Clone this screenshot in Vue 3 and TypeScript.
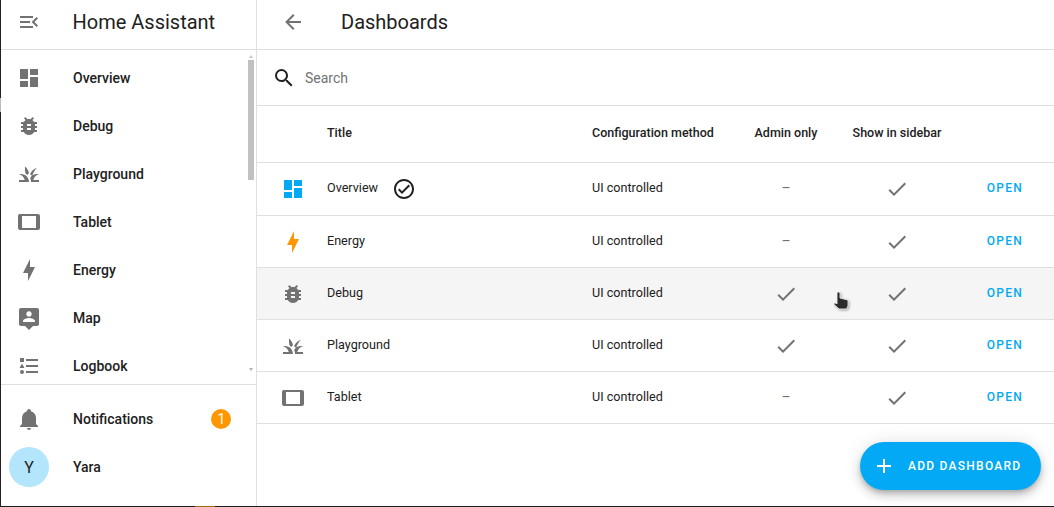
<script setup lang="ts">
const icons = {
  menuOpen: 'M21,15.61L19.59,17L14.58,12L19.59,7L21,8.39L17.44,12L21,15.61M3,6H16V8H3V6M3,13V11H13V13H3M3,18V16H16V18H3Z',
  dashboard: 'M13,3V9H21V3M13,21H21V11H13M3,21H11V15H3M3,13H11V3H3V13Z',
  bug: 'M14,12H10V10H14M14,16H10V14H14M20,8H17.19C16.74,7.22 16.12,6.55 15.37,6.04L17,4.41L15.59,3L13.42,5.17C12.96,5.06 12.5,5 12,5C11.5,5 11.04,5.06 10.59,5.17L8.41,3L7,4.41L8.62,6.04C7.88,6.55 7.26,7.22 6.81,8H4V10H6.09C6.04,10.33 6,10.66 6,11V12H4V14H6V15C6,15.34 6.04,15.67 6.09,16H4V18H6.81C7.85,19.79 9.78,21 12,21C14.22,21 16.15,19.79 17.19,18H20V16H17.91C17.96,15.67 18,15.34 18,15V14H20V12H18V11C18,10.66 17.96,10.33 17.91,10H20V8Z',
  grass: 'M12 20H2V18H7.75C7 15.19 4.81 13 2 12.26C2.64 12.09 3.31 12 4 12C8.42 12 12 15.58 12 20M22 12.26C21.36 12.09 20.69 12 20 12C17.07 12 14.5 13.58 13.12 15.96C13.41 16.59 13.65 17.28 13.79 18C13.93 18.65 14 19.32 14 20H22V18H16.24C17 15.19 19.19 13 22 12.26M20 5.8C16.8 6.8 14.3 9 13.1 12.2C13.9 12.8 14.6 13.4 15.2 14.1C16 11.2 17.6 8 20 5.8M8 4.5C10 6 11.5 8.5 12 11.3C11.3 11.9 10.8 12.4 10.4 13C9.8 12.5 9.2 12 8.6 11.7C8 9.5 7.8 7 8 4.5Z',
  tablet: 'M19,18H5V6H19M21,4H3C1.89,4 1,4.89 1,6V18A2,2 0 0,0 3,20H21A2,2 0 0,0 23,18V6C23,4.89 22.1,4 21,4Z',
  bolt: 'M11 15H6L13 1V9H18L11 23V15Z',
  map: 'M20,2H4C2.9,2 2,2.9 2,4V18C2,19.1 2.9,20 4,20H8L12,24L16,20H20C21.1,20 22,19.1 22,18V4C22,2.9 21.1,2 20,2M12,5.3C13.49,5.3 14.7,6.51 14.7,8C14.7,9.49 13.49,10.7 12,10.7C10.51,10.7 9.3,9.49 9.3,8C9.3,6.51 10.51,5.3 12,5.3M18,16H6V15.1C6,13.1 10,12 12,12C14,12 18,13.1 18,15.1V16Z',
  logbook: 'M5,9.5L7.5,14H2.5L5,9.5M3,4H7V8H3V4M5,20A2,2 0 0,0 7,18A2,2 0 0,0 5,16A2,2 0 0,0 3,18A2,2 0 0,0 5,20M9,5V7H21V5H9M9,19H21V17H9V19M9,13H21V11H9V13Z',
  bell: 'M21,19V20H3V19L5,17V11C5,7.9 7.03,5.17 10,4.29C10,4.19 10,4.1 10,4A2,2 0 0,1 12,2A2,2 0 0,1 14,4C14,4.1 14,4.19 14,4.29C16.97,5.17 19,7.9 19,11V17L21,19M14,21A2,2 0 0,1 12,23A2,2 0 0,1 10,21',
  back: 'M20,11V13H8L13.5,18.5L12.08,19.92L4.16,12L12.08,4.08L13.5,5.5L8,11H20Z',
  search: 'M9.5,3A6.5,6.5 0 0,1 16,9.5C16,11.11 15.41,12.59 14.44,13.73L14.71,14H15.5L20.5,19L19,20.5L14,15.5V14.71L13.73,14.44C12.59,15.41 11.11,16 9.5,16A6.5,6.5 0 0,1 3,9.5A6.5,6.5 0 0,1 9.5,3M9.5,5C7,5 5,7 5,9.5C5,12 7,14 9.5,14C12,14 14,12 14,9.5C14,7 12,5 9.5,5Z',
  defaultMark: 'M12 2C6.5 2 2 6.5 2 12S6.5 22 12 22 22 17.5 22 12 17.5 2 12 2M12 20C7.59 20 4 16.41 4 12S7.59 4 12 4 20 7.59 20 12 16.41 20 12 20M16.59 7.58L10 14.17L7.41 11.59L6 13L10 17L18 9L16.59 7.58Z',
  check: 'M21,7L9,19L3.5,13.5L4.91,12.09L9,16.17L19.59,5.59L21,7Z',
  plus: 'M19,13H13V19H11V13H5V11H11V5H13V11H19V13Z',
}

const navItems = [
  { label: 'Overview', icon: icons.dashboard },
  { label: 'Debug', icon: icons.bug },
  { label: 'Playground', icon: icons.grass },
  { label: 'Tablet', icon: icons.tablet },
  { label: 'Energy', icon: icons.bolt },
  { label: 'Map', icon: icons.map },
  { label: 'Logbook', icon: icons.logbook },
]

const rows = [
  { title: 'Overview', icon: icons.dashboard, color: '#03a9f4', isDefault: true, admin: false, hovered: false },
  { title: 'Energy', icon: icons.bolt, color: '#ff9800', isDefault: false, admin: false, hovered: false },
  { title: 'Debug', icon: icons.bug, color: '#727272', isDefault: false, admin: true, hovered: true },
  { title: 'Playground', icon: icons.grass, color: '#727272', isDefault: false, admin: true, hovered: false },
  { title: 'Tablet', icon: icons.tablet, color: '#727272', isDefault: false, admin: false, hovered: false },
]
</script>

<template>
  <div class="screen">
    <aside class="sidebar">
      <div class="brand">
        <svg class="icon nav-icon" viewBox="0 0 24 24"><path :d="icons.menuOpen" /></svg>
        <span class="brand-title">Home Assistant</span>
      </div>
      <nav class="nav">
        <a v-for="item in navItems" :key="item.label" class="nav-item">
          <svg class="icon nav-icon" viewBox="0 0 24 24"><path :d="item.icon" /></svg>
          <span>{{ item.label }}</span>
        </a>
        <div class="scroll-thumb"></div>
        <div class="scroll-arrow scroll-arrow--up"></div>
        <div class="scroll-arrow scroll-arrow--down"></div>
      </nav>
      <div class="sidebar-footer">
        <a class="nav-item">
          <svg class="icon nav-icon" viewBox="0 0 24 24"><path :d="icons.bell" /></svg>
          <span>Notifications</span>
          <span class="badge">1</span>
        </a>
        <a class="nav-item">
          <span class="avatar">Y</span>
          <span>Yara</span>
        </a>
      </div>
    </aside>

    <main class="content">
      <header class="topbar">
        <svg class="icon back-icon" viewBox="0 0 24 24"><path :d="icons.back" /></svg>
        <h1>Dashboards</h1>
      </header>
      <div class="search">
        <svg class="icon search-icon" viewBox="0 0 24 24"><path :d="icons.search" /></svg>
        <span>Search</span>
      </div>
      <div class="row row--head">
        <span></span>
        <span>Title</span>
        <span>Configuration method</span>
        <span class="center">Admin only</span>
        <span class="center">Show in sidebar</span>
        <span></span>
      </div>
      <div
        v-for="(row, index) in rows"
        :key="row.title"
        class="row"
        :class="{ 'row--hover': row.hovered, 'row--first': index === 0 }"
      >
        <span class="cell-icon">
          <svg class="icon" viewBox="0 0 24 24" :style="{ fill: row.color }"><path :d="row.icon" /></svg>
        </span>
        <span class="title-cell">
          <span class="text">{{ row.title }}</span>
          <svg v-if="row.isDefault" class="icon default-mark" viewBox="0 0 24 24"><path :d="icons.defaultMark" /></svg>
        </span>
        <span class="text">UI controlled</span>
        <span class="center">
          <svg v-if="row.admin" class="icon check" viewBox="0 0 24 24"><path :d="icons.check" /></svg>
          <span v-else class="text dash">–</span>
        </span>
        <span class="center">
          <svg class="icon check" viewBox="0 0 24 24"><path :d="icons.check" /></svg>
        </span>
        <a class="text open">OPEN</a>
      </div>
      <button class="fab" type="button">
        <svg class="icon" viewBox="0 0 24 24"><path :d="icons.plus" /></svg>
        <span>ADD DASHBOARD</span>
      </button>
    </main>

    <svg class="cursor" viewBox="0 0 18 20" width="18" height="20">
      <path
        d="M4 2C4 .8 7 .8 7 2V7L15 9V15L13.5 18H6L1 13.5C.5 12 2.5 11.5 4 13Z"
        fill="#2b2b2b"
        stroke="#fff"
        stroke-width="0.8"
      />
    </svg>
    <div class="edge-left"></div>
    <div class="edge-bottom"></div>
  </div>
</template>

<style>
html,
body {
  margin: 0;
  background: #fff;
}
</style>

<style scoped>
.screen {
  position: relative;
  display: flex;
  width: 1054px;
  height: 507px;
  overflow: hidden;
  background: #fff;
  color: #212121;
  font-family: Roboto, sans-serif;
}

.icon {
  display: block;
  width: 24px;
  height: 24px;
  fill: #727272;
}

.sidebar {
  display: flex;
  flex-direction: column;
  flex: none;
  width: 256px;
  height: 507px;
  border-right: 1px solid #e0e0e0;
}

.brand {
  display: flex;
  align-items: center;
  flex: none;
  box-sizing: border-box;
  height: 50px;
  padding-bottom: 6px;
  border-bottom: 1px solid #e0e0e0;
}

.brand-title {
  margin-left: -0.5px;
  font-size: 20px;
}

.nav-icon {
  flex: none;
  margin: 0 32px 0 17px;
}

.nav {
  position: relative;
  flex: none;
  height: 334px;
  padding-top: 4px;
  box-sizing: border-box;
  overflow: hidden;
}

.nav-item {
  display: flex;
  align-items: center;
  height: 48px;
  font-size: 14px;
  font-weight: 500;
}

.scroll-thumb {
  position: absolute;
  top: 10px;
  left: 248px;
  width: 6px;
  height: 120px;
  background: #c1c1c1;
}

.scroll-arrow {
  position: absolute;
  left: 249px;
  border-left: 2.5px solid transparent;
  border-right: 2.5px solid transparent;
}

.scroll-arrow--up {
  top: 5px;
  border-bottom: 3px solid #c8c8c8;
}

.scroll-arrow--down {
  top: 318px;
  border-top: 3px solid #b0b0b0;
}

.sidebar-footer {
  flex: 1;
  padding-top: 10px;
  border-top: 1px solid #e0e0e0;
}

.badge {
  display: flex;
  align-items: center;
  justify-content: center;
  width: 20px;
  height: 20px;
  margin-left: 58px;
  border-radius: 50%;
  background: #ff9800;
  color: #fff;
  font-size: 14px;
  font-weight: 400;
}

.avatar {
  display: flex;
  align-items: center;
  justify-content: center;
  flex: none;
  width: 40px;
  height: 40px;
  margin: 0 24px 0 9px;
  border-radius: 50%;
  background: #b3e5fc;
  font-size: 16px;
  font-weight: 400;
}

.content {
  position: relative;
  flex: 1;
  min-width: 0;
}

.topbar {
  display: flex;
  align-items: center;
  box-sizing: border-box;
  height: 50px;
  padding-bottom: 6px;
  border-bottom: 1px solid #e0e0e0;
}

.back-icon {
  margin: 0 36px 0 24px;
}

.topbar h1 {
  margin: 0;
  font-size: 20px;
  font-weight: 400;
}

.search {
  display: flex;
  align-items: center;
  gap: 9px;
  height: 55px;
  padding-left: 15px;
  border-bottom: 1px solid #e0e0e0;
  color: #727272;
  font-size: 14px;
}

.search-icon {
  fill: #212121;
}

.row {
  display: grid;
  grid-template-columns: 70px 265px 139px 110px 112px 1fr;
  align-items: center;
  height: 51px;
  border-bottom: 1px solid #e0e0e0;
  font-size: 12.6px;
}

.row--head {
  height: 52px;
  padding-bottom: 4px;
  font-size: 12.5px;
  font-weight: 500;
}

.row--first {
  height: 52px;
}

.row--first .text {
  padding-bottom: 4px;
}

.row--first .open,
.row--first .dash {
  padding-bottom: 2px;
}

.row--hover {
  background: #f5f5f5;
}

.text {
  padding-bottom: 2px;
}

.cell-icon {
  display: flex;
  justify-content: center;
  padding-left: 2px;
}

.title-cell {
  display: flex;
  align-items: center;
  gap: 14px;
}

.default-mark {
  fill: #212121;
}

.center {
  display: flex;
  justify-content: center;
}

.dash {
  color: #727272;
  font-size: 14px;
}

.open {
  padding-right: 31px;
  color: #03a9f4;
  font-size: 12px;
  font-weight: 500;
  letter-spacing: 1.25px;
  text-align: right;
}

.fab {
  position: absolute;
  top: 442px;
  left: 603px;
  display: flex;
  align-items: center;
  gap: 12px;
  width: 181px;
  height: 48px;
  padding: 0 0 0 12px;
  border: none;
  border-radius: 24px;
  background: #03a9f4;
  box-shadow: 0 3px 5px -1px rgba(0, 0, 0, 0.2), 0 6px 10px rgba(0, 0, 0, 0.14), 0 1px 18px rgba(0, 0, 0, 0.12);
  color: #fff;
  font-family: Roboto, sans-serif;
  font-size: 12px;
  font-weight: 500;
  letter-spacing: 1.25px;
}

.fab .icon {
  fill: #fff;
}

.cursor {
  position: absolute;
  top: 291px;
  left: 833px;
  filter: drop-shadow(1px 1px 1px rgba(0, 0, 0, 0.35));
}

.edge-left {
  position: absolute;
  top: 0;
  left: 0;
  width: 1px;
  height: 100%;
  background: linear-gradient(#222 0 98px, #bbb 98px 112px, #222 112px);
}

.edge-bottom {
  position: absolute;
  left: 0;
  bottom: 0;
  width: 100%;
  height: 1px;
  background: linear-gradient(90deg, #1c1c1c 0 195px, #a06a10 195px 215px, #1c1c1c 215px);
}
</style>
